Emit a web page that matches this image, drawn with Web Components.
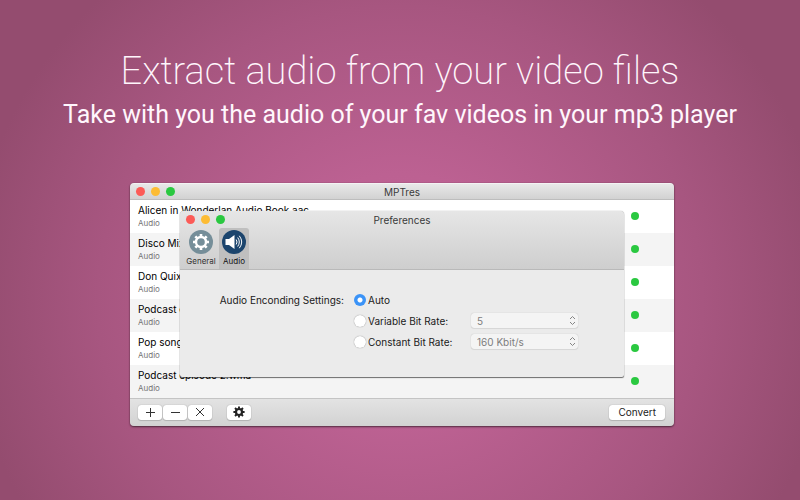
<!DOCTYPE html>
<html lang="en">
<head>
<meta charset="utf-8">
<meta name="viewport" content="width=device-width, initial-scale=1">
<title>MPTres</title>
<style>
  html { height: 100%; }
  body {
    margin: 0;
    min-height: 100%;
    font-family: Inter, "Liberation Sans", sans-serif;
    font-size: 10px;
    line-height: 12px;
    color: #1c1c1c;
    background: radial-gradient(ellipse 54% 84% at 50% 60%, #c36596 0%, #bc6192 30%, #a75680 70%, #944c6f 100%);
  }
</style>
</head>
<body>
<promo-page>
  <promo-headline>
    <span slot="title">Extract audio from your video files</span>
    <span slot="tagline">Take with you the audio of your fav videos in your mp3 player</span>
  </promo-headline>
  <converter-window>
    <file-row name="Alicen in Wonderlan Audio Book.aac"></file-row>
    <file-row name="Disco Mix"></file-row>
    <file-row name="Don Quixote"></file-row>
    <file-row name="Podcast episode"></file-row>
    <file-row name="Pop song"></file-row>
    <file-row name="Podcast episode 2.wma"></file-row>
    <preferences-window slot="dialog"></preferences-window>
  </converter-window>
</promo-page>

<script>
  const define = (name, markup, setup) => customElements.define(name, class extends HTMLElement {
    constructor() {
      super();
      const root = this.attachShadow({ mode: "open" });
      root.innerHTML = `<style>:host, *, ::before, ::after { box-sizing: border-box; }</style>${markup}`;
      if (setup) setup(this, root);
    }
  });

  define("promo-page", `
    <style>
      :host { display: flex; flex-direction: column; align-items: center; gap: 50px; padding: 46px 0 73px; }
      ::slotted(converter-window) { width: 68%; margin-left: 4px; }
    </style>
    <slot></slot>`);

  define("promo-headline", `
    <style>
      :host { display: block; text-align: center; color: #fff6fc; font-family: Roboto, sans-serif; }
      h1 { margin: 0; font-size: 38px; line-height: 50px; font-weight: 200; }
      p { margin: 0; font-size: 25px; line-height: 37px; font-weight: 400; }
    </style>
    <h1><slot name="title"></slot></h1>
    <p><slot name="tagline"></slot></p>`);

  define("traffic-lights", `
    <style>
      :host { display: flex; gap: 6px; }
      button { width: 9px; height: 9px; padding: 0; border: 0; border-radius: 50%; background: #fc5b57; }
      .min { background: #fdbc34; }
      .zoom { background: #2ac840; }
    </style>
    <button type="button" aria-label="Close"></button>
    <button type="button" class="min" aria-label="Minimize"></button>
    <button type="button" class="zoom" aria-label="Zoom"></button>`);

  define("window-title", `
    <style>
      :host { display: grid; grid-template-columns: 1fr auto 1fr; align-items: center; padding: 0 6px; color: #3a3a3a; }
    </style>
    <traffic-lights></traffic-lights><slot></slot>`);

  define("file-row", `
    <style>
      :host { display: flex; align-items: center; justify-content: space-between; height: 33px; padding: 0 35px 1px 8px; background: #fff; color: #000; }
      :host(:nth-of-type(even)) { background: #f4f4f4; }
      .text { display: grid; gap: 2px; white-space: nowrap; }
      small { font-size: 8px; line-height: 10px; color: #757575; }
      i { width: 8px; height: 8px; border-radius: 50%; background: #2ac840; }
    </style>
    <div class="text"><span></span><small>Audio</small></div><i></i>`,
    (host, root) => { root.querySelector("span").textContent = host.getAttribute("name"); });

  define("tool-button", `
    <style>
      :host { display: flex; }
      button { display: grid; place-items: center; flex: 1; height: 15px; padding: 0 9px; border: 0; border-radius: 3px;
        background: #fff; box-shadow: 0 0 1px #0006, 0 1px 1px #0002; font: inherit; color: #222; }
      :host([label]) button { padding: 0 6px; }
    </style>
    <button type="button"><slot></slot></button>`,
    (host, root) => {
      const label = host.getAttribute("label");
      if (label) root.querySelector("button").setAttribute("aria-label", label);
    });

  define("converter-window", `
    <style>
      :host { display: block; position: relative; border-radius: 4px; box-shadow: 0 1px 2px #0008, 0 0 1px #0006; }
      .frame { border-radius: 4px; overflow: hidden; }
      window-title { height: 17px; background: linear-gradient(#e8e8e8, #d2d2d2); border-bottom: 1px solid #bdbdbd; border-top: 1px solid #f3f3f3; }
      footer { display: flex; align-items: center; height: 28px; padding: 0 9px 1px 8px; background: linear-gradient(#e3e3e3, #d2d2d2); border-top: 1px solid #c4c4c4; }
      .group { display: flex; gap: 1px; margin-right: 15px; }
      .convert { margin-left: auto; }
      svg { display: block; width: 12px; height: 12px; }
      .group tool-button { width: 24px; }
      .gear { width: 24px; }
      .line { fill: none; stroke: #333; stroke-width: 1; }
      .dialog { position: absolute; left: 50px; right: 50px; top: 28px; }
    </style>
    <div class="frame">
      <window-title>MPTres</window-title>
      <slot></slot>
      <footer>
        <div class="group">
          <tool-button label="Add"><svg class="line" viewBox="0 0 12 12"><path d="M6.500 2v9M2 6.500h9"/></svg></tool-button>
          <tool-button label="Remove"><svg class="line" viewBox="0 0 12 12"><path d="M2 6.500h9"/></svg></tool-button>
          <tool-button label="Clear"><svg class="line" viewBox="0 0 12 12"><path d="M2 2l8 8M10 2l-8 8"/></svg></tool-button>
        </div>
        <tool-button class="gear" label="Settings"><svg viewBox="-6 -6 12 12">
          <circle r="3" fill="none" stroke="#222" stroke-width="2.200"/>
          <path d="M0-3.500V-5.600M0 3.500V5.600M-3.500 0H-5.600M3.500 0H5.600M-2.500-2.500L-4-4M2.500-2.500L4-4M-2.500 2.500L-4 4M2.500 2.500L4 4" stroke="#222" stroke-width="1.900"/>
        </svg></tool-button>
        <tool-button class="convert">Convert</tool-button>
      </footer>
    </div>
    <div class="dialog"><slot name="dialog"></slot></div>`);

  define("pref-tab", `
    <style>
      :host { display: block; }
      button { display: grid; justify-items: center; gap: 1px; width: 30px; height: 41px; padding: 2px 0; border: 0; border-radius: 3px 3px 0 0;
        background: none; font: inherit; font-size: 8px; line-height: 10px; color: #333; }
      :host([selected]) button { background: #bfbfbf; color: #111; }
    </style>
    <button type="button"><slot name="icon"></slot><span><slot></slot></span></button>`);

  define("audio-settings", `
    <style>
      :host { display: block; color: #1a1a1a; }
      fieldset { display: grid; grid-template-columns: 164px 107px 107px; grid-auto-rows: 15px; column-gap: 10px; row-gap: 6px; align-items: center; margin: 0; padding: 22px 0 28px; border: 0; white-space: nowrap; }
      .caption { text-align: right; }
      label { grid-column: 2; display: flex; align-items: center; gap: 2px; }
      input { appearance: none; width: 12px; height: 12px; margin: 0; border-radius: 50%; background: #fff; box-shadow: 0 0 1px #0008; }
      input:checked { background: radial-gradient(circle, #fff 0 2px, #3b93f7 3px); box-shadow: none; }
      .pick { display: grid; align-items: center; }
      .pick > * { grid-area: 1 / 1; }
      select { appearance: none; width: 100%; height: 15px; padding: 0 6px; border: 0; border-radius: 3px; background: #f4f4f4;
        box-shadow: 0 0 1px #0004, 0 1px 1px #0001; font: inherit; color: #7d7d7d; opacity: 1; }
      svg { justify-self: end; width: 7px; height: 11px; margin-right: 2px; fill: none; stroke: #858585; pointer-events: none; }
    </style>
    <fieldset aria-labelledby="caption">
      <span class="caption" id="caption">Audio Enconding Settings:</span>
      <label><input type="radio" name="rate" checked>Auto</label>
      <label><input type="radio" name="rate">Variable Bit Rate:</label>
      <span class="pick"><select aria-label="Variable Bit Rate" disabled><option>5</option></select>
        <svg viewBox="0 0 7 11"><path d="M1 4l2.500-2.500L6 4M1 7l2.500 2.500L6 7"/></svg></span>
      <label><input type="radio" name="rate">Constant Bit Rate:</label>
      <span class="pick"><select aria-label="Constant Bit Rate" disabled><option>160 Kbit/s</option></select>
        <svg viewBox="0 0 7 11"><path d="M1 4l2.500-2.500L6 4M1 7l2.500 2.500L6 7"/></svg></span>
    </fieldset>`);

  define("preferences-window", `
    <style>
      :host { display: block; overflow: hidden; border-radius: 4px 4px 2px 2px; background: #ebebeb; box-shadow: 0 1px 1px #0008, 0 0 1px #0008; }
      header { background: linear-gradient(#e6e6e6, #cecece); border-bottom: 1px solid #b9b9b9; }
      window-title { height: 17px; }
      nav { display: flex; gap: 3px; padding-left: 6px; }
      svg { display: block; width: 24px; height: 24px; }
    </style>
    <header>
      <window-title>Preferences</window-title>
      <nav>
        <pref-tab><svg slot="icon" viewBox="-12 -12 24 24">
          <circle r="12" fill="#758e99"/>
          <circle r="5" fill="none" stroke="#fff" stroke-width="2.400"/>
          <path d="M0-5.500V-8M0 5.500V8M-5.500 0H-8M5.500 0H8M-3.900-3.900L-5.700-5.700M3.900-3.900L5.700-5.700M-3.900 3.900L-5.700 5.700M3.900 3.900L5.700 5.700" stroke="#fff" stroke-width="2.600"/>
        </svg>General</pref-tab>
        <pref-tab selected><svg slot="icon" viewBox="0 0 24 24">
          <circle cx="12" cy="12" r="12" fill="#1c456d"/>
          <path d="M3.500 9h3.500L12.500 5v14L7 15H3.500z" fill="#fff"/>
          <path d="M14.200 9.500q1.600 2.500 0 5M15.700 7.500q3.200 4.500 0 9M17.300 5.800q4.800 6.200 0 12.400" fill="none" stroke="#fff" stroke-width="1"/>
        </svg>Audio</pref-tab>
      </nav>
    </header>
    <audio-settings></audio-settings>`);
</script>
</body>
</html>
